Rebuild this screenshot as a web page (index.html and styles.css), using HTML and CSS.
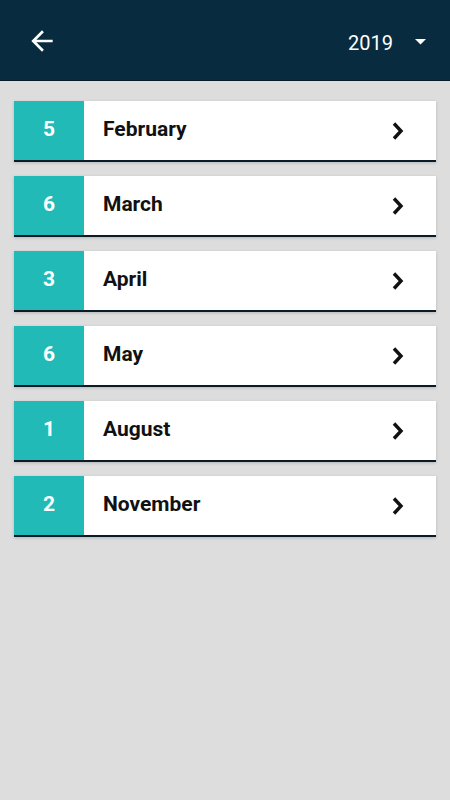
FILE: index.html
```html
<!DOCTYPE html>
<html>
<head lang="en">
    <meta charset="UTF-8">
    <title>Months</title>
    <link rel="stylesheet" href="styles.css">
</head>
<body>
<div id="header">
    <span class="back">
        <svg width="32" height="32" viewBox="0 0 24 24"><path d="M20 11H7.83l5.59-5.59L12 4l-8 8 8 8 1.41-1.41L7.83 13H20v-2z" fill="#fff"/></svg>
    </span>
    <div class="year">
        <span>2019</span>
        <svg width="11" height="6" viewBox="0 0 11 6"><path d="M0 0h11L5.5 5.5z" fill="#fff"/></svg>
    </div>
</div>
<ul id="list">
    <li><span class="count">5</span><span class="month">February</span><span class="chev"><svg width="20" height="24" viewBox="0 0 20 24"><path d="M6 4.5l7 7.5-7 7.5" fill="none" stroke="#111" stroke-width="3.4"/></svg></span></li>
    <li><span class="count">6</span><span class="month">March</span><span class="chev"><svg width="20" height="24" viewBox="0 0 20 24"><path d="M6 4.5l7 7.5-7 7.5" fill="none" stroke="#111" stroke-width="3.4"/></svg></span></li>
    <li><span class="count">3</span><span class="month">April</span><span class="chev"><svg width="20" height="24" viewBox="0 0 20 24"><path d="M6 4.5l7 7.5-7 7.5" fill="none" stroke="#111" stroke-width="3.4"/></svg></span></li>
    <li><span class="count">6</span><span class="month">May</span><span class="chev"><svg width="20" height="24" viewBox="0 0 20 24"><path d="M6 4.5l7 7.5-7 7.5" fill="none" stroke="#111" stroke-width="3.4"/></svg></span></li>
    <li><span class="count">1</span><span class="month">August</span><span class="chev"><svg width="20" height="24" viewBox="0 0 20 24"><path d="M6 4.5l7 7.5-7 7.5" fill="none" stroke="#111" stroke-width="3.4"/></svg></span></li>
    <li><span class="count">2</span><span class="month">November</span><span class="chev"><svg width="20" height="24" viewBox="0 0 20 24"><path d="M6 4.5l7 7.5-7 7.5" fill="none" stroke="#111" stroke-width="3.4"/></svg></span></li>
</ul>
</body>
</html>
```

FILE: styles.css
```css
* {
    margin: 0;
    padding: 0;
}

ul, ol {
    list-style: none;
}

html, body {
    height: 100%;
}

body {
    background: #dddddd;
    font-family: Roboto, "Liberation Sans", sans-serif;
}

#header {
    height: 81px;
    background: #082b3f;
    border-bottom: 1px solid #061c29;
    box-sizing: border-box;
    display: flex;
    align-items: center;
    justify-content: space-between;
    padding: 0 24px 0 26px;
}

#header .back {
    display: flex;
    margin-top: 2px;
}

#header .year {
    display: flex;
    align-items: center;
    gap: 22px;
    color: #fff;
    font-size: 20px;
    margin-top: 6px;
}

#header .year svg {
    margin-top: -2px;
}

#list {
    padding: 20px 14px 0 14px;
    display: flex;
    flex-direction: column;
    gap: 14px;
}

#list li {
    height: 61px;
    box-sizing: border-box;
    background: #fff;
    border-bottom: 2px solid #0a1a26;
    box-shadow: 0 1px 3px rgba(0, 0, 0, 0.18);
    display: flex;
    align-items: center;
}

#list .count {
    width: 70px;
    height: 100%;
    box-sizing: border-box;
    padding-bottom: 3px;
    background: #21bab7;
    color: #fff;
    font-weight: bold;
    font-size: 21px;
    display: flex;
    align-items: center;
    justify-content: center;
}

#list .month {
    flex: 1;
    padding-left: 19px;
    margin-bottom: 3px;
    font-weight: bold;
    font-size: 21px;
    color: #111;
}

#list .chev {
    display: flex;
    margin-right: 28px;
}
```
